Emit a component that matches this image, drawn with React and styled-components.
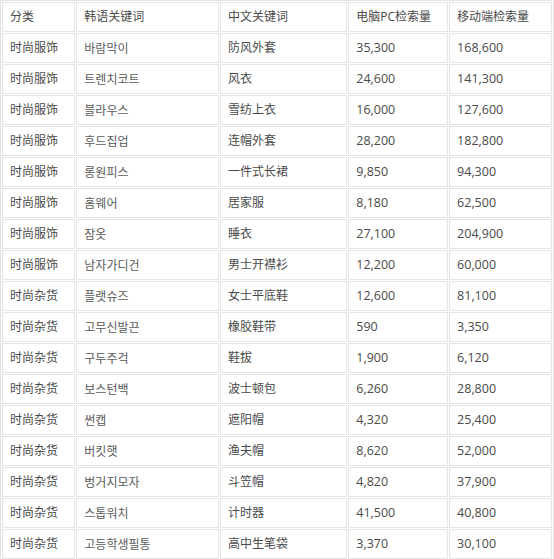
import React from "react";
import styled, { createGlobalStyle } from "styled-components";

const Global = createGlobalStyle`
  html, body { margin: 0; padding: 0; background: #fff; }
  body { font-family: "Open Sans", "Noto Sans CJK SC", sans-serif; }
`;

const Table = styled.table`
  width: 554px;
  border-collapse: separate;
  border-spacing: 1px;
  border: 1px solid #e3e3e3;
  table-layout: fixed;
  font-size: 12px;
  color: #4a4a4a;
`;

const Cell = styled.td`
  height: 27px;
  padding: 0 0 1px 7px;
  border: 1px solid #e6e6e6;
  font-weight: normal;
  text-align: left;
  vertical-align: middle;
  white-space: nowrap;
  overflow: hidden;
  line-height: 16px;
  font-size: ${(p) => (p.$num ? "12.5px" : "12px")};
  font-family: ${(p) =>
    p.$ko
      ? `"Noto Sans CJK KR", "Open Sans", sans-serif`
      : `"Open Sans", "Noto Sans CJK SC", sans-serif`};
  color: ${(p) => (p.$ko ? "#5a5a5a" : "#4a4a4a")};
`;

const HeadCell = styled(Cell).attrs({ as: "th" })``;

const widths = [72, 140, 125, 98, 101];

const header = ["分类", "韩语关键词", "中文关键词", "电脑PC检索量", "移动端检索量"];

const rows = [
  ["时尚服饰", "바람막이", "防风外套", "35,300", "168,600"],
  ["时尚服饰", "트렌치코트", "风衣", "24,600", "141,300"],
  ["时尚服饰", "블라우스", "雪纺上衣", "16,000", "127,600"],
  ["时尚服饰", "후드집업", "连帽外套", "28,200", "182,800"],
  ["时尚服饰", "롱원피스", "一件式长裙", "9,850", "94,300"],
  ["时尚服饰", "홈웨어", "居家服", "8,180", "62,500"],
  ["时尚服饰", "잠옷", "睡衣", "27,100", "204,900"],
  ["时尚服饰", "남자가디건", "男士开襟衫", "12,200", "60,000"],
  ["时尚杂货", "플랫슈즈", "女士平底鞋", "12,600", "81,100"],
  ["时尚杂货", "고무신발끈", "橡胶鞋带", "590", "3,350"],
  ["时尚杂货", "구두주걱", "鞋拔", "1,900", "6,120"],
  ["时尚杂货", "보스턴백", "波士顿包", "6,260", "28,800"],
  ["时尚杂货", "썬캡", "遮阳帽", "4,320", "25,400"],
  ["时尚杂货", "버킷햇", "渔夫帽", "8,620", "52,000"],
  ["时尚杂货", "벙거지모자", "斗笠帽", "4,820", "37,900"],
  ["时尚杂货", "스톱워치", "计时器", "41,500", "40,800"],
  ["时尚杂货", "고등학생필통", "高中生笔袋", "3,370", "30,100"],
];

export default function App() {
  return (
    <>
      <Global />
      <Table>
        <colgroup>
          {widths.map((w, i) => (
            <col key={i} style={{ width: w }} />
          ))}
        </colgroup>
        <thead>
          <tr>
            {header.map((h) => (
              <HeadCell key={h}>{h}</HeadCell>
            ))}
          </tr>
        </thead>
        <tbody>
          {rows.map((r, i) => (
            <tr key={i}>
              {r.map((c, j) => (
                <Cell key={j} $ko={j === 1} $num={j >= 3}>
                  {c}
                </Cell>
              ))}
            </tr>
          ))}
        </tbody>
      </Table>
    </>
  );
}
